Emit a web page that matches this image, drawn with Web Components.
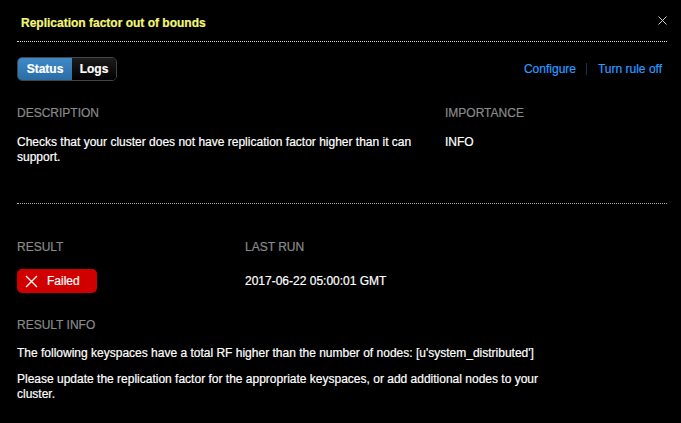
<!DOCTYPE html>
<html>
<head>
<meta charset="utf-8">
<title>Rule</title>
<style>
html, body { margin: 0; background: #000; }
body { font: 12px/15px "Liberation Sans", Arial, sans-serif; color: #fff; -webkit-text-stroke: 0.2px; }
</style>
</head>
<body>
<rule-modal>
  <span slot="title">Replication factor out of bounds</span>
  <rule-tabs slot="tabs"></rule-tabs>
  <a slot="actions" class="first" href="#">Configure</a>
  <a slot="actions" href="#">Turn rule off</a>
  <rule-section slot="top" label="DESCRIPTION" style="width:428px">
    Checks that your cluster does not have replication factor higher than it can support.
  </rule-section>
  <rule-section slot="top" label="IMPORTANCE">INFO</rule-section>
  <rule-section slot="result" label="RESULT" style="width:228px"><status-pill>Failed</status-pill></rule-section>
  <rule-section slot="result" label="LAST RUN"><div style="height:24px;line-height:24px;font-weight:500">2017-06-22 05:00:01 GMT</div></rule-section>
  <rule-section slot="info" label="RESULT INFO">
    <p style="margin:-1px 0 11px">The following keyspaces have a total RF higher than the number of nodes: [u'system_distributed']</p>
    <p style="margin:0;width:550px">Please update the replication factor for the appropriate keyspaces, or add additional nodes to your cluster.</p>
  </rule-section>
</rule-modal>

<script>
//Modal shell
class RuleModal extends HTMLElement {
  constructor() {
    super();
    this.attachShadow({ mode: "open" });
    this.shadowRoot.innerHTML = `
<style>
:host { display: block; width: 681px; height: 423px; overflow: hidden; background: #000; box-sizing: border-box; padding: 0 14px 0 17px; }
header { display: flex; justify-content: space-between; align-items: center; height: 41px; border-bottom: 1px dotted #ddd; }
h1 { margin: 0 0 0 4px; font-size: 12px; line-height: 16px; font-weight: bold; color: #f5f777; position: relative; top: 2px; }
.close { width: 9px; height: 9px; display: block; }
.bar { display: flex; justify-content: space-between; align-items: center; margin-top: 15px; height: 24px; }
.actions { display: flex; align-items: center; margin-right: 5px; }
.actions ::slotted(a) { color: #2a9cff; text-decoration: none; }
.actions ::slotted(a.first) { line-height: 12px; padding-right: 10px; margin-right: 11px; border-right: 1px solid #12344f; }
.top { display: flex; margin-top: 25px; height: 97px; border-bottom: 1px dotted #aaa; }
.result { display: flex; margin-top: 36px; }
.info { margin-top: 25px; }
</style>
<header>
  <h1><slot name="title"></slot></h1>
  <svg class="close" viewBox="0 0 9 9"><path d="M.5.5l8 8M8.5.5l-8 8" stroke="#ccc" fill="none"/></svg>
</header>
<div class="bar"><slot name="tabs"></slot><div class="actions"><slot name="actions"></slot></div></div>
<div class="top"><slot name="top"></slot></div>
<div class="result"><slot name="result"></slot></div>
<div class="info"><slot name="info"></slot></div>`;
  }
}
customElements.define("rule-modal", RuleModal);

//Status / Logs switch
class RuleTabs extends HTMLElement {
  constructor() {
    super();
    this.attachShadow({ mode: "open" });
    this.shadowRoot.innerHTML = `
<style>
:host { display: flex; box-sizing: border-box; width: 100px; height: 24px; border: 1px solid #444; border-radius: 5px; overflow: hidden; font-weight: bold; }
span { display: flex; align-items: center; justify-content: center; }
.on { width: 54px; background: linear-gradient(#3f8ac8, #2a6ca6); }
.off { flex: 1; background: linear-gradient(#1c1c1c, #000); }
</style>
<span class="on">Status</span><span class="off">Logs</span>`;
  }
}
customElements.define("rule-tabs", RuleTabs);

//Label + content block
class RuleSection extends HTMLElement {
  constructor() {
    super();
    this.attachShadow({ mode: "open" });
    this.shadowRoot.innerHTML = `
<style>
:host { display: block; }
.label { color: #8a8a8a; margin-bottom: 14px; }
</style>
<div class="label"></div><slot></slot>`;
    this.shadowRoot.querySelector(".label").textContent = this.getAttribute("label");
  }
}
customElements.define("rule-section", RuleSection);

//Red failed badge
class StatusPill extends HTMLElement {
  constructor() {
    super();
    this.attachShadow({ mode: "open" });
    this.shadowRoot.innerHTML = `
<style>
:host { display: flex; align-items: center; box-sizing: border-box; width: 80px; height: 24px; padding-left: 8px; gap: 9px; background: #d00000; border-radius: 5px; }
svg { width: 13px; height: 13px; }
</style>
<svg viewBox="0 0 13 13"><path d="M1 1l11 11M12 1L1 12" stroke="#fff" stroke-width="1.3" fill="none"/></svg><slot></slot>`;
  }
}
customElements.define("status-pill", StatusPill);
</script>
</body>
</html>
